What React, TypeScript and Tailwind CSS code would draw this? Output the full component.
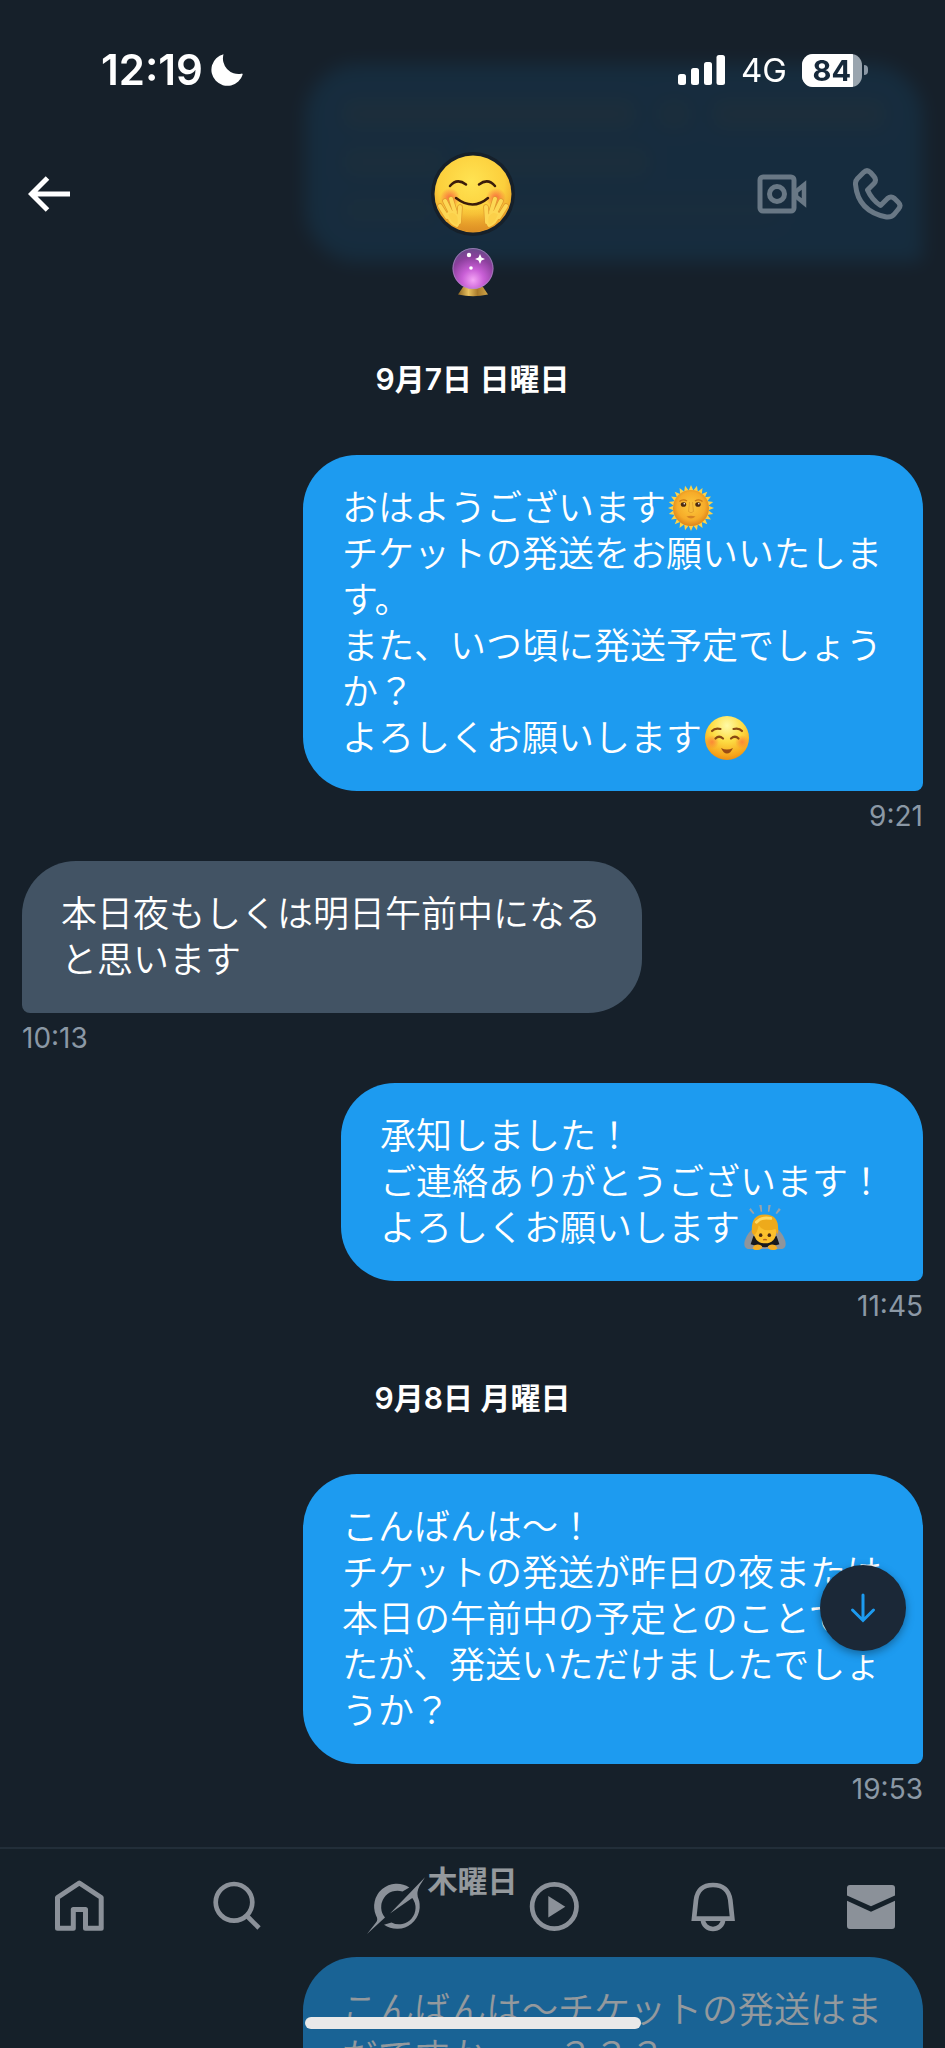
// Direct message thread: translucent header and tab bar over a scrolling
// conversation. Bubbles are grouped by day, own messages sit on the right.
import type { ReactNode } from 'react';
import clsx from 'clsx';

type Message = {
  mine: boolean;
  lines: { text: string; emoji?: ReactNode }[];
  time?: string;
};

type Day = { label: string; messages: Message[] };

function SunEmoji(): JSX.Element {
  const rays = Array.from({ length: 24 }, (_, i) => i * 15);
  return (
    <svg viewBox="1 1 46 46" role="img" aria-label="🌞" className="h-full w-full">
      <defs>
        <radialGradient id="sun-face" cx="50%" cy="45%" r="55%">
          <stop offset="0" stopColor="#fcc93c" />
          <stop offset="0.7" stopColor="#f6ab29" />
          <stop offset="1" stopColor="#dd841b" />
        </radialGradient>
      </defs>
      {rays.map((deg) => (
        <path key={deg} d="M21.4 7 L24 1 L26.6 7 Z" fill="#f9d24c" transform={`rotate(${deg} 24 24)`} />
      ))}
      <circle cx="24" cy="24" r="18" fill="url(#sun-face)" />
      <path d="M12.500 17.500 Q16 14.500 20 17 M28 17 Q32 14.500 35.500 17.500" fill="none" stroke="#c97716" strokeWidth="1.400" />
      <ellipse cx="16.500" cy="20.500" rx="2.700" ry="2.300" fill="#4b2a12" />
      <ellipse cx="31" cy="20.500" rx="2.700" ry="2.300" fill="#4b2a12" />
      <circle cx="17.300" cy="19.800" r="0.800" fill="#fff" />
      <circle cx="31.800" cy="19.800" r="0.800" fill="#fff" />
      <path d="M22.500 18 L21.500 27.500 Q24 30 26.500 27.500 L25.500 18" fill="#f9bd3a" stroke="#e09a2a" strokeWidth="0.800" />
      <path d="M19.500 32.500 Q24 31 28.500 32.500 Q24 36.500 19.500 32.500 Z" fill="#d58222" />
    </svg>
  );
}

function SmileEmoji(): JSX.Element {
  return (
    <svg viewBox="1 1 46 46" role="img" aria-label="☺️" className="h-full w-full">
      <defs>
        <radialGradient id="smile-face" cx="50%" cy="22%" r="80%">
          <stop offset="0" stopColor="#fffaa6" />
          <stop offset="0.45" stopColor="#fddc43" />
          <stop offset="0.85" stopColor="#f6a51c" />
          <stop offset="1" stopColor="#e88a14" />
        </radialGradient>
        <radialGradient id="smile-cheek">
          <stop offset="0" stopColor="#fb7a37" stopOpacity="0.8" />
          <stop offset="1" stopColor="#fb7a37" stopOpacity="0" />
        </radialGradient>
      </defs>
      <circle cx="24" cy="24" r="22" fill="url(#smile-face)" />
      <circle cx="9" cy="28" r="7" fill="url(#smile-cheek)" />
      <circle cx="39" cy="28" r="7" fill="url(#smile-cheek)" />
      <g fill="none" stroke="#8a4a12" strokeWidth="2.200" strokeLinecap="round">
        <path d="M9 17 Q12 13.500 17.500 15" />
        <path d="M30.500 15 Q36 13.500 39 17" />
        <path d="M12.500 24.500 Q16 21 20 24.500" />
        <path d="M28 24.500 Q32 21 35.500 24.500" />
      </g>
      <path d="M18 34 Q24 37 30 34 Q27.500 39.500 24 39.500 Q20.500 39.500 18 34 Z" fill="#9a4c14" />
    </svg>
  );
}

function BowEmoji(): JSX.Element {
  return (
    <svg viewBox="0 0 48 48" role="img" aria-label="🙇" className="h-full w-full">
      <g fill="#9aa3ab">
        <path d="M9 3 L13 8.500 L11.500 9.500 L7.500 5 Z" />
        <path d="M18 0 L20.500 0 L21 7 L19.500 7 Z" />
        <path d="M27.500 0 L30 0 L28.500 7 L27 7 Z" />
        <path d="M38.500 3 L40.500 5 L36.500 9.500 L35 8.500 Z" />
      </g>
      <path d="M14 23 Q6 28 3 37 Q1 44 6 46 L17 46 L31 46 L42 46 Q47 44 45 37 Q42 28 34 23 Z" fill="#8f959c" />
      <path d="M12 32 Q24 40 36 32 L39 41 Q24 47 9 41 Z" fill="#17191d" />
      <path d="M13 42 Q18 40 21 43 Q21 47 16 47 Q12 47 11 45 Z" fill="#f4ae24" />
      <path d="M35 42 Q30 40 27 43 Q27 47 32 47 Q36 47 37 45 Z" fill="#f4ae24" />
      <path d="M12 25 Q12 12 24 12 Q36 12 36 25 Q36 40 24 40 Q12 40 12 25 Z" fill="#fbc02c" />
      <path d="M10.500 29 Q8.500 10 24 10 Q39.500 10 37.500 29 Q36.500 32 35 25 Q22 29 17.500 21 Q15 32 12 31 Z" fill="#eeaa1b" />
      <path d="M15 18 Q20 12 30 14" fill="none" stroke="#ffd960" strokeWidth="3" strokeLinecap="round" />
      <ellipse cx="19.500" cy="31.500" rx="1.800" ry="2" fill="#4b2a12" />
      <ellipse cx="28.500" cy="31.500" rx="1.800" ry="2" fill="#4b2a12" />
      <path d="M22 36.500 Q24 35.500 26 36.500" fill="none" stroke="#b5601a" strokeWidth="1.300" />
    </svg>
  );
}

function HugAvatar(): JSX.Element {
  return (
    <svg viewBox="0 0 84 84" role="img" aria-label="🤗" className="size-[84px]">
      <defs>
        <radialGradient id="hug-face" cx="48%" cy="34%" r="66%">
          <stop offset="0" stopColor="#ffe352" />
          <stop offset="0.65" stopColor="#fccf3c" />
          <stop offset="1" stopColor="#e89a25" />
        </radialGradient>
        <radialGradient id="hug-cheek">
          <stop offset="0" stopColor="#f8563f" stopOpacity="0.85" />
          <stop offset="1" stopColor="#f8563f" stopOpacity="0" />
        </radialGradient>
        <linearGradient id="hug-chin" x1="0" y1="0" x2="0" y2="1">
          <stop offset="0" stopColor="#f0a52c" stopOpacity="0" />
          <stop offset="1" stopColor="#dc8f25" />
        </linearGradient>
      </defs>
      <circle cx="42" cy="42" r="42" fill="#16202a" />
      <circle cx="42" cy="42" r="38.500" fill="url(#hug-face)" />
      <path d="M28 54 Q42 62 56 54 L58 76 Q42 84 26 76 Z" fill="url(#hug-chin)" />
      <circle cx="19" cy="46" r="10" fill="url(#hug-cheek)" />
      <circle cx="65" cy="46" r="10" fill="url(#hug-cheek)" />
      <g fill="none" stroke="#3b1c0a" strokeLinecap="round" strokeWidth="2.500">
        <path d="M19 34 Q26 25.500 35 32.500" />
        <path d="M48 32.500 Q57 25.500 64 34" />
        <path d="M25 46 Q42 59 57 46" />
      </g>
      {/* hands */}
      <g stroke="#e09a2c" strokeWidth="5.500" strokeLinecap="round">
        <path d="M9 54 L16 65 M14 49 L20 61 M20 47 L24 60 M29 55 L28 70" />
        <path d="M75 54 L68 65 M70 49 L64 61 M64 47 L60 60 M55 55 L56 70" />
      </g>
      <g stroke="#fdd754" strokeWidth="4" strokeLinecap="round" fill="#fcd04a">
        <path d="M9 54 L16 65 M14 49 L20 61 M20 47 L24 60 M29 55 L28 70" />
        <path d="M16 62 Q22 57 27 64 Q29 71 26 74 Q19 72 16 62 Z" strokeWidth="2" />
        <path d="M75 54 L68 65 M70 49 L64 61 M64 47 L60 60 M55 55 L56 70" />
        <path d="M68 62 Q62 57 57 64 Q55 71 58 74 Q65 72 68 62 Z" strokeWidth="2" />
      </g>
    </svg>
  );
}

function CrystalBall(): JSX.Element {
  return (
    <svg viewBox="0 0 44 50" role="img" aria-label="🔮" className="h-[50px] w-[44px]">
      <defs>
        <radialGradient id="orb" cx="50%" cy="78%" r="75%">
          <stop offset="0" stopColor="#f4a4f5" />
          <stop offset="0.35" stopColor="#c95fd6" />
          <stop offset="0.75" stopColor="#8b3f9c" />
          <stop offset="1" stopColor="#6d4a8c" />
        </radialGradient>
        <linearGradient id="orb-base" x1="0" y1="0" x2="1" y2="0">
          <stop offset="0" stopColor="#8c6420" />
          <stop offset="0.35" stopColor="#e9c25f" />
          <stop offset="0.65" stopColor="#a87a2b" />
          <stop offset="1" stopColor="#d0a548" />
        </linearGradient>
      </defs>
      <path d="M12 40 H32 L37 47.500 Q22 51 7 47.500 Z" fill="url(#orb-base)" />
      <circle cx="22" cy="21.500" r="20.500" fill="url(#orb)" />
      <circle cx="22" cy="21.500" r="20" fill="none" stroke="#a99ac4" strokeWidth="1" opacity="0.6" />
      <circle cx="18" cy="8" r="2.200" fill="#fff" />
      <circle cx="20" cy="21" r="1.800" fill="#fff" />
      <path d="M29 7 L30.500 10.500 L34 12 L30.500 13.500 L29 17 L27.500 13.500 L24 12 L27.500 10.500 Z" fill="#fff" />
    </svg>
  );
}

const DAYS: Day[] = [
  {
    label: '9月7日 日曜日',
    messages: [
      {
        mine: true,
        time: '9:21',
        lines: [
          { text: 'おはようございます', emoji: <SunEmoji /> },
          { text: 'チケットの発送をお願いいたします。' },
          { text: 'また、いつ頃に発送予定でしょうか？' },
          { text: 'よろしくお願いします', emoji: <SmileEmoji /> },
        ],
      },
      { mine: false, time: '10:13', lines: [{ text: '本日夜もしくは明日午前中になると思います' }] },
      {
        mine: true,
        time: '11:45',
        lines: [
          { text: '承知しました！' },
          { text: 'ご連絡ありがとうございます！' },
          { text: 'よろしくお願いします', emoji: <BowEmoji /> },
        ],
      },
    ],
  },
  {
    label: '9月8日 月曜日',
    messages: [
      {
        mine: true,
        time: '19:53',
        lines: [
          { text: 'こんばんは〜！' },
          { text: 'チケットの発送が昨日の夜または本日の午前中の予定とのことでしたが、発送いただけましたでしょうか？' },
        ],
      },
    ],
  },
  {
    label: '木曜日',
    messages: [{ mine: true, lines: [{ text: 'こんばんは〜チケットの発送はまだですか、、、？？？' }] }],
  },
];

function Bubble({ message }: { message: Message }): JSX.Element {
  const { mine, lines, time } = message;
  return (
    <li className={clsx('flex flex-col', mine ? 'items-end' : 'items-start')}>
      <div
        className={clsx(
          'max-w-[620px] rounded-[54px] px-[39px] py-[30px] text-[36px] leading-[46px] font-[350] text-white',
          mine ? 'rounded-br-lg bg-[#1d9bf0]' : 'rounded-bl-lg bg-[#425364]',
        )}
      >
        {lines.map((line) => (
          <p key={line.text} className="break-all">
            {line.text}
            {line.emoji ? <span className="ml-[2px] inline-block size-[46px] align-top">{line.emoji}</span> : null}
          </p>
        ))}
      </div>
      {time ? <time className="mt-2 h-[34px] text-[28px] leading-[34px] text-[#8b98a5]">{time}</time> : null}
    </li>
  );
}

function DayGroup({ day }: { day: Day }): JSX.Element {
  return (
    <section>
      <h2 className="py-[57px] text-center text-[30px] leading-[37px] font-semibold text-white">{day.label}</h2>
      <ol className="flex flex-col gap-7">
        {day.messages.map((m) => (
          <Bubble key={m.lines[0].text} message={m} />
        ))}
      </ol>
    </section>
  );
}

// Older message scrolled under the header; only its soft shape shows through.
function ScrolledAwayBubble(): JSX.Element {
  return (
    <div aria-hidden="true" className="mb-[42px] flex justify-end">
      <div className="flex h-[198px] w-[618px] flex-col gap-5 rounded-[54px] rounded-br-lg bg-[#1d9bf0] px-[39px] py-9">
        <div className="flex h-7 gap-6">
          <span className="w-[290px] rounded bg-[#8fa9b4]/50" />
          <span className="w-8 rounded bg-[#8fa9b4]/40" />
          <span className="grow rounded bg-[#8fa9b4]/50" />
        </div>
        <div className="flex h-7 gap-6">
          <span className="w-[100px] rounded bg-[#8fa9b4]/40" />
          <span className="w-[180px] rounded bg-[#8fa9b4]/40" />
        </div>
        <div className="flex h-7 gap-6">
          <span className="w-[90px] rounded bg-[#8fa9b4]/30" />
          <span className="w-[320px] rounded bg-[#8fa9b4]/20" />
        </div>
      </div>
    </div>
  );
}

function StatusBar(): JSX.Element {
  return (
    <div className="flex h-[140px] items-center justify-between pr-[77px] pl-[101px] text-white">
      <div className="flex items-center gap-2">
        <span className="text-[42px] leading-none font-semibold">12:19</span>
        <svg viewBox="0 0 32 32" className="size-8" aria-label="Focus mode">
          <path d="M12.500 0.300 A16 16 0 1 0 31.700 20.500 A1 1 0 0 0 30.400 19.700 A15.500 15.500 0 0 1 12.500 0.300 Z" fill="currentColor" />
        </svg>
      </div>
      <div className="flex items-center gap-[15px]">
        <svg viewBox="0 0 48 31" className="h-[31px] w-12" aria-label="Signal strength">
          <rect x="0" y="19" width="8" height="11" rx="2.500" fill="currentColor" />
          <rect x="13" y="13" width="8" height="17" rx="2.500" fill="currentColor" />
          <rect x="26" y="7" width="8" height="23" rx="2.500" fill="currentColor" />
          <rect x="38.500" y="0" width="8.500" height="30" rx="2.500" fill="currentColor" />
        </svg>
        <span className="text-[33px] leading-none">4G</span>
        <div className="flex items-center gap-[2px]">
          <div className="flex h-[33px] w-[60px] overflow-hidden rounded-[11px] bg-[#9aa5af]">
            <span className="flex w-[51px] items-center justify-end bg-white pr-[2px] text-[29px] leading-none font-bold text-[#16293b]">
              84
            </span>
          </div>
          <span className="h-[10px] w-1 rounded-r-full bg-[#8b98a5]" />
        </div>
      </div>
    </div>
  );
}

function Header(): JSX.Element {
  return (
    <header className="absolute inset-x-0 top-0 h-[308px] bg-[#16202a]/90 backdrop-blur-[9px]">
      <StatusBar />
      <div className="grid grid-cols-[1fr_84px_1fr] pt-3">
        <div className="flex h-[84px] items-center pl-7">
          <button type="button" aria-label="Back">
            <svg viewBox="0 0 42 36" className="h-9 w-[42px]" fill="none" stroke="#fff" strokeWidth="5">
              <path d="M42 18 H4 M19.500 2 L3.500 18 L19.500 34" />
            </svg>
          </button>
        </div>
        <div className="flex flex-col items-center gap-[11px]">
          <HugAvatar />
          <h1>
            <CrystalBall />
          </h1>
        </div>
        <div className="flex h-[84px] items-center justify-end gap-[46px] pr-[42px] text-[#697885]">
          <button type="button" aria-label="Video call">
            <svg viewBox="0 0 50 40" className="h-10 w-[50px]" fill="none" stroke="currentColor" strokeWidth="5">
              <rect x="3" y="3" width="34" height="34" rx="3" />
              <circle cx="20" cy="20" r="7.500" />
              <path d="M39 17.500 L47 11 V29 L39 22.500 Z" strokeWidth="4.500" />
            </svg>
          </button>
          <button type="button" aria-label="Voice call">
            <svg viewBox="0 0 50 52" className="h-[52px] w-[50px]" fill="none" stroke="currentColor" strokeWidth="5" strokeLinejoin="round">
              <path d="M10.500 4.500 Q14 1 17.500 4.500 L21 8.500 Q24 12 21 15.500 L14.500 22 Q19 32 27.500 37.500 L34.500 30.500 Q38 27.500 41.500 30.500 L45.500 34.500 Q48.500 37.500 45.500 41 L41 46.500 Q38 49.500 33.500 49 Q5 43.500 2.500 16.500 Q2.200 13 4.500 10.500 Z" />
            </svg>
          </button>
        </div>
      </div>
    </header>
  );
}

const TABS: { label: string; icon: ReactNode }[] = [
  {
    label: 'Home',
    icon: <path d="M4.500 17.500 L26.300 3 L48.200 17.500 V48.300 H32.500 V29.500 H20.300 V48.300 H4.500 Z" strokeWidth="5" strokeLinejoin="round" />,
  },
  {
    label: 'Search',
    icon: (
      <>
        <circle cx="23" cy="22.300" r="18.300" strokeWidth="4.700" />
        <path d="M36 36 L48 48" strokeWidth="4.700" />
      </>
    ),
  },
  {
    label: 'Grok',
    icon: (
      <g fill="currentColor" stroke="none">
        <path d="M39.300 7.500 A22.700 22.700 0 0 0 6 35.500 Q8.500 39.500 6 42.500 L-3 54 L15 37.500 A16.300 16.300 0 0 1 32.500 11.500 Z" />
        <path d="M55 -2.700 L20 33.500 L42.300 18 A16.500 16.500 0 0 1 21.500 42.500 L14 44.700 A22.700 22.700 0 0 0 47.800 17 Q46.500 12 49.500 6 Z" />
      </g>
    ),
  },
  {
    label: 'Video',
    icon: (
      <>
        <circle cx="26.300" cy="26.500" r="22.200" strokeWidth="4.700" />
        <path d="M20.300 16 L37.300 26.700 L20.300 37.500 Z" fill="currentColor" stroke="none" />
      </>
    ),
  },
  {
    label: 'Notifications',
    icon: (
      <>
        <path d="M7 38.700 L9 20 Q11 5 26 5 Q41 5 43.300 20 L45.300 38.700 Z" strokeWidth="4.700" />
        <path d="M16 40 A10 9 0 0 0 36 40" strokeWidth="4.700" />
      </>
    ),
  },
  {
    label: 'Messages',
    icon: (
      <g fill="currentColor" stroke="none">
        <path d="M5 5 H47 Q50 5 50 8 V15.500 L26 26.300 L2 15.500 V8 Q2 5 5 5 Z" />
        <path d="M2 20.700 L26 31.700 L50 20.700 V46 Q50 49 47 49 H5 Q2 49 2 46 Z" />
      </g>
    ),
  },
];

function TabBar(): JSX.Element {
  return (
    <nav className="absolute inset-x-0 bottom-0 flex h-[201px] flex-col justify-between border-t-2 border-[#222e39] bg-[#16202a]/46 pt-[31px] pb-[19px]">
      <ul className="flex justify-between pr-[48px] pl-[53px] text-[#8b9199]">
        {TABS.map((tab) => (
          <li key={tab.label}>
            <a href={`#${tab.label.toLowerCase()}`} aria-label={tab.label}>
              <svg viewBox="0 0 52 52" className="size-[52px] overflow-visible" fill="none" stroke="currentColor">
                {tab.icon}
              </svg>
            </a>
          </li>
        ))}
      </ul>
      <div className="mx-auto h-3 w-[336px] rounded-full bg-[#e9e9e9]" />
    </nav>
  );
}

export default function App(): JSX.Element {
  return (
    <div className="relative h-screen overflow-hidden bg-[#16202a] font-['Inter','Noto_Sans_CJK_JP',sans-serif]">
      <main className="h-full overflow-hidden px-[22px] pt-16">
        <ScrolledAwayBubble />
        {DAYS.map((day) => (
          <DayGroup key={day.label} day={day} />
        ))}
      </main>
      <Header />
      <button
        type="button"
        aria-label="Scroll to latest"
        className="absolute right-[39px] bottom-[397px] flex size-[86px] items-center justify-center rounded-full bg-[#1b2837] text-[#1d9bf0] shadow-[0_3px_8px_rgba(0,0,0,0.35)]"
      >
        <svg viewBox="0 0 26 30" className="h-[30px] w-[26px]" fill="none" stroke="currentColor" strokeWidth="3" strokeLinecap="round">
          <path d="M13 2 V27 M2.500 17 L13 27.500 L23.500 17" />
        </svg>
      </button>
      <TabBar />
    </div>
  );
}
